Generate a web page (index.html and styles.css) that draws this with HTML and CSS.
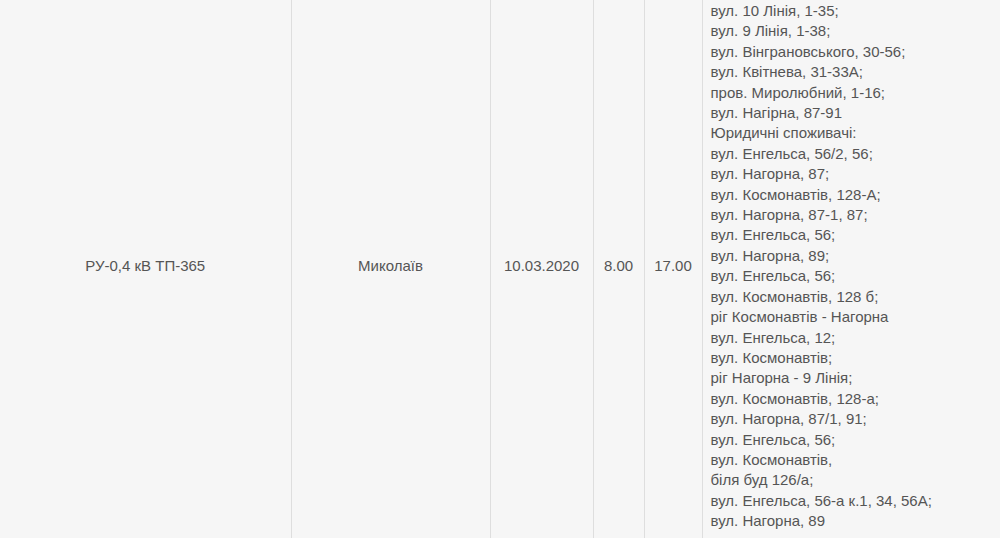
FILE: index.html
```html
<!DOCTYPE html>
<html lang="uk">
<head>
  <meta charset="UTF-8">
  <title>Графік відключень</title>
  <link rel="stylesheet" href="styles.css">
</head>
<body>

  <table class="grafik">
    <colgroup>
      <col class="col-obj">
      <col class="col-misto">
      <col class="col-data">
      <col class="col-chas">
      <col class="col-chas2">
      <col class="col-adresy">
    </colgroup>
    <tr>
      <td>РУ-0,4 кВ ТП-365</td>
      <td>Миколаїв</td>
      <td>10.03.2020</td>
      <td>8.00</td>
      <td>17.00</td>
      <td class="adresy">
        вул. 10 Лінія, 1-35;<br>
        вул. 9 Лінія, 1-38;<br>
        вул. Вінграновського, 30-56;<br>
        вул. Квітнева, 31-33А;<br>
        пров. Миролюбний, 1-16;<br>
        вул. Нагірна, 87-91<br>
        Юридичні споживачі:<br>
        вул. Енгельса, 56/2, 56;<br>
        вул. Нагорна, 87;<br>
        вул. Космонавтів, 128-А;<br>
        вул. Нагорна, 87-1, 87;<br>
        вул. Енгельса, 56;<br>
        вул. Нагорна, 89;<br>
        вул. Енгельса, 56;<br>
        вул. Космонавтів, 128 б;<br>
        ріг Космонавтів - Нагорна<br>
        вул. Енгельса, 12;<br>
        вул. Космонавтів;<br>
        ріг Нагорна - 9 Лінія;<br>
        вул. Космонавтів, 128-а;<br>
        вул. Нагорна, 87/1, 91;<br>
        вул. Енгельса, 56;<br>
        вул. Космонавтів,<br>
        біля буд 126/а;<br>
        вул. Енгельса, 56-а к.1, 34, 56А;<br>
        вул. Нагорна, 89
      </td>
    </tr>
  </table>

</body>
</html>
```

FILE: styles.css
```css
body {
  margin: 0;
  background-color: #f6f6f6;
  font-family: "Liberation Sans", Arial, sans-serif;
  font-size: 15px;
  color: #555;
  overflow: hidden;
}
.grafik {
  border-collapse: collapse;
  table-layout: fixed;
  width: 1000px;
}
.col-obj { width: 291px; }
.col-misto { width: 199px; }
.col-data { width: 103px; }
.col-chas { width: 51px; }
.col-chas2 { width: 58px; }
.col-adresy { width: 298px; }
.grafik td {
  border-left: 1px solid #dedede;
  padding: 1px 8px 7px;
  line-height: 20.4px;
  text-align: center;
  vertical-align: middle;
}
.grafik td:first-child {
  border-left: none;
}
.grafik td.adresy {
  text-align: left;
}
```
